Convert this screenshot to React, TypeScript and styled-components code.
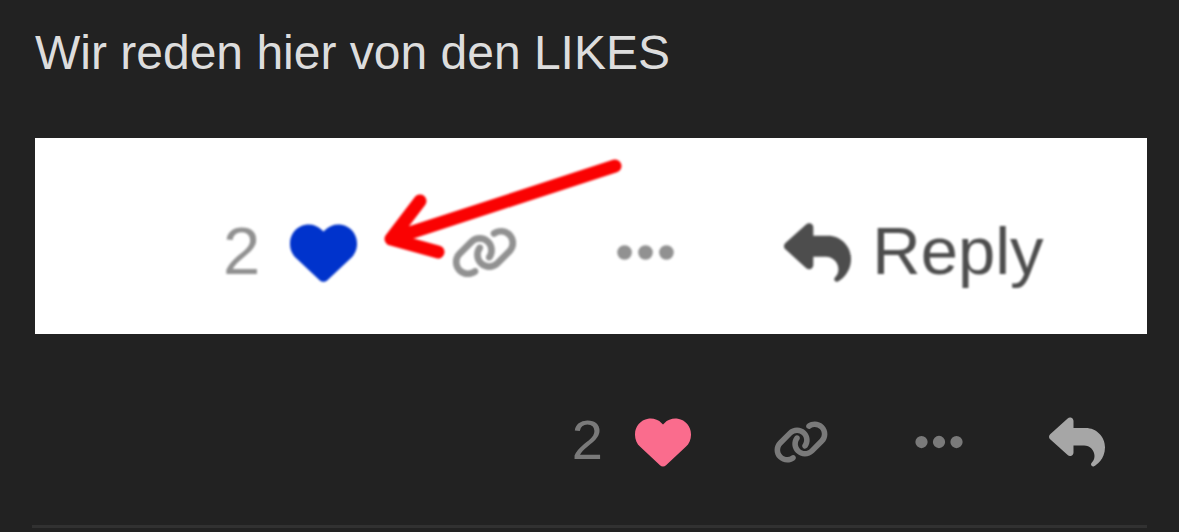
import React from "react";
import styled, { createGlobalStyle } from "styled-components";
import { FaEllipsis, FaHeart, FaLink, FaReply } from "react-icons/fa6";

const GlobalStyle = createGlobalStyle`
  body {
    margin: 0;
    background: #222222;
    font-family: "Liberation Sans", Arial, sans-serif;
  }
`;

const Post = styled.article`
  padding: 25px 32px 0;
`;

const Message = styled.p`
  margin: 0 3px 57px;
  color: #dddddd;
  font-size: 48px;
  line-height: 56px;
`;

const Attachment = styled.figure`
  position: relative;
  margin: 0 0 0 3px;
  padding: 81px 0 48px 188px;
  background: #ffffff;
  overflow: hidden;
`;

const Actions = styled.div<{ $size: number; $gap: number }>`
  display: flex;
  align-items: center;
  gap: ${(p) => p.$gap}px;
  font-size: ${(p) => p.$size}px;
  line-height: ${(p) => p.$size - 6}px;
`;

const PictureActions = styled(Actions)`
  filter: blur(1px);
`;

const PostActions = styled(Actions)`
  justify-content: flex-end;
  padding: 80px 42px 55px 0;
`;

const Likes = styled.div<{ $gap: number }>`
  display: flex;
  align-items: center;
  gap: ${(p) => p.$gap}px;
`;

const ActionButton = styled.button<{ $color: string }>`
  display: flex;
  align-items: center;
  gap: 21px;
  margin: 0;
  padding: 0;
  border: 0;
  background: none;
  color: ${(p) => p.$color};
  font: inherit;
  cursor: pointer;

  svg {
    display: block;
    flex: none;
  }
`;

const Label = styled.span`
  padding-bottom: 4px;
`;

const ReplyButton = styled(ActionButton)`
  margin-left: 11px;
`;

const Arrow = styled.svg`
  position: absolute;
  left: 340px;
  top: 16px;
  width: 256px;
  height: 116px;
  filter: blur(1px);
  pointer-events: none;
`;

const Divider = styled.hr`
  height: 3px;
  margin: 0;
  border: 0;
  background: #313131;
`;

export default function App() {
  return (
    <>
      <GlobalStyle />
      <Post>
        <Message>Wir reden hier von den LIKES</Message>
        <Attachment>
          <PictureActions $size={67} $gap={94}>
            <Likes $gap={30}>
              <ActionButton $color="#919191">
                <Label>2</Label>
              </ActionButton>
              <ActionButton $color="#0033cc" aria-label="Like">
                <FaHeart />
              </ActionButton>
            </Likes>
            <ActionButton $color="#919191" aria-label="Share">
              <FaLink />
            </ActionButton>
            <ActionButton $color="#919191" aria-label="More">
              <FaEllipsis />
            </ActionButton>
            <ReplyButton $color="#4d4d4d">
              <FaReply />
              <Label>Reply</Label>
            </ReplyButton>
          </PictureActions>
          <Arrow viewBox="0 0 256 116" aria-hidden="true">
            <path
              d="M240 12 16 85M45 47 16 85 63 98"
              fill="none"
              stroke="#fa0202"
              strokeWidth="13"
              strokeLinecap="round"
              strokeLinejoin="round"
            />
          </Arrow>
        </Attachment>
        <PostActions $size={56} $gap={82}>
          <Likes $gap={32}>
            <ActionButton $color="#7a7a7a">
              <Label>2</Label>
            </ActionButton>
            <ActionButton $color="#fa6c8d" aria-label="Like">
              <FaHeart />
            </ActionButton>
          </Likes>
          <ActionButton $color="#7a7a7a" aria-label="Share">
            <FaLink />
          </ActionButton>
          <ActionButton $color="#7a7a7a" aria-label="More">
            <FaEllipsis />
          </ActionButton>
          <ActionButton $color="#a6a6a6" aria-label="Reply">
            <FaReply />
          </ActionButton>
        </PostActions>
        <Divider />
      </Post>
    </>
  );
}
